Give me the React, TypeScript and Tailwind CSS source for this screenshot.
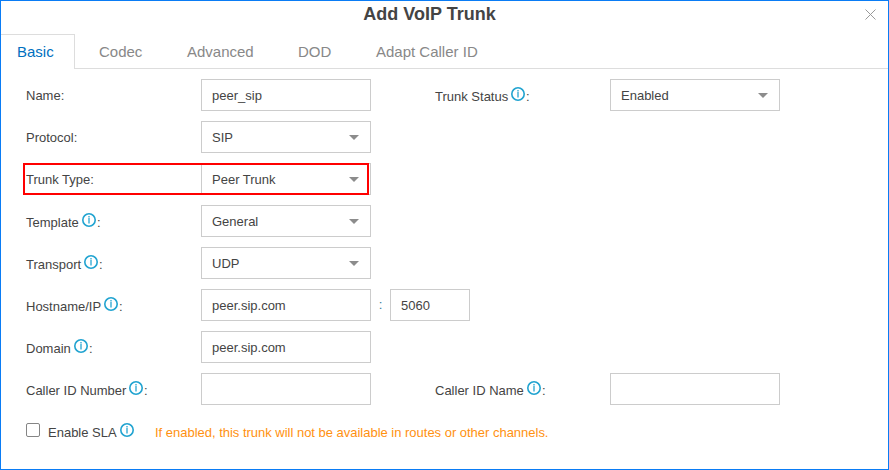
import type { ReactNode } from "react";

function InfoIcon() {
  return (
    <svg className="h-[14px] w-[14px] shrink-0" viewBox="0 0 14 14" fill="none">
      <circle cx="7" cy="7" r="6.2" stroke="#20a3d0" strokeWidth="1.6" />
      <path d="M7 3v1.500M7 5v5.500" stroke="#4fb6da" strokeWidth="1.6" />
    </svg>
  );
}

function Label({ text, textWidth, width = "w-[175px]" }: { text: string; textWidth?: string; width?: string }) {
  return (
    <label className={`flex h-8 shrink-0 items-center whitespace-nowrap ${width}`}>
      {textWidth ? (
        <>
          <span className={`${textWidth} shrink-0 pt-[3px]`}>{text}</span>
          <span className="-mt-[2px]"><InfoIcon /></span>
          <span className="ml-px pt-[3px]">:</span>
        </>
      ) : (
        <span className="pt-px">{text}</span>
      )}
    </label>
  );
}

function Field({ value = "", select = false, width = "w-[170px]" }: { value?: string; select?: boolean; width?: string }) {
  return (
    <div className={`flex h-8 shrink-0 items-center justify-between border border-[#cccccc] bg-white pr-[11px] pl-[10px] ${width}`}>
      <span className="pt-px">{value}</span>
      {select && (
        <svg className="mt-px h-[5px] w-[10px]" viewBox="0 0 10 5" fill="#8c8c8c">
          <path d="M0 0h10L5 5z" />
        </svg>
      )}
    </div>
  );
}

function Row({ children }: { children: ReactNode }) {
  return <div className="flex h-8 items-center">{children}</div>;
}

function Tab({ children, width }: { children: ReactNode; width: string }) {
  return <button className={`h-[35px] border-b border-[#dddddd] pt-[2px] text-left text-[#888888] ${width}`}>{children}</button>;
}

export default function App() {
  return (
    <div className="h-[470px] w-[889px] overflow-hidden border border-[#0a7cf5] bg-white font-['Liberation_Sans',Arial,sans-serif] text-[13px] leading-4 text-[#444444]">
      <header className="relative flex h-[33px] justify-center">
        <h1 className="pt-[3px] pr-[30px] text-[18px] leading-5 font-bold">Add VoIP Trunk</h1>
        <button aria-label="Close" className="absolute top-[8px] right-[12px]">
          <svg className="h-[11px] w-[11px]" viewBox="0 0 11 11" stroke="#999999" strokeWidth="1">
            <path d="M.5 .5l10 10M10.500 .5l-10 10" />
          </svg>
        </button>
      </header>
      <nav className="flex h-[35px] text-[15px]">
        <button className="h-[35px] w-[74px] shrink-0 border-t border-r border-[#dddddd] pl-4 text-left text-[#0070c0]">Basic</button>
        <Tab width="w-[88px] pl-6">Codec</Tab>
        <Tab width="w-[111px] pl-6">Advanced</Tab>
        <Tab width="w-[78px] pl-6">DOD</Tab>
        <Tab width="flex-1 pl-6">Adapt Caller ID</Tab>
      </nav>
      <main className="flex flex-col gap-[10px] pt-[10px] pl-[25px]">
        <Row>
          <Label text="Name:" />
          <Field value="peer_sip" />
          <div className="w-16 shrink-0" />
          <Label text="Trunk Status" textWidth="w-[76px]" />
          <Field value="Enabled" select />
        </Row>
        <Row>
          <Label text="Protocol:" />
          <Field value="SIP" select />
        </Row>
        <div className="relative flex h-8 items-center">
          <Label text="Trunk Type:" />
          <Field value="Peer Trunk" select />
          <div className="absolute top-0 -left-[3px] h-8 w-[346px] border-2 border-[#ff0000]" />
        </div>
        <Row>
          <Label text="Template" textWidth="w-[56px]" />
          <Field value="General" select />
        </Row>
        <Row>
          <Label text="Transport" textWidth="w-[58px]" />
          <Field value="UDP" select />
        </Row>
        <Row>
          <Label text="Hostname/IP" textWidth="w-[78px]" />
          <Field value="peer.sip.com" />
          <span className="w-[19px] shrink-0 text-center text-[#397b9a]">:</span>
          <Field value="5060" width="w-20" />
        </Row>
        <Row>
          <Label text="Domain" textWidth="w-[48px]" />
          <Field value="peer.sip.com" />
        </Row>
        <Row>
          <Label text="Caller ID Number" textWidth="w-[103px]" />
          <Field />
          <div className="w-16 shrink-0" />
          <Label text="Caller ID Name" textWidth="w-[92px]" />
          <Field />
        </Row>
        <Row>
          <span className="-mt-[2px] h-[14px] w-[14px] shrink-0 rounded-[2px] border border-[#858585]" />
          <span className="ml-2 w-[72px] shrink-0 pt-[3px] whitespace-nowrap">Enable SLA</span>
          <span className="-mt-[2px]"><InfoIcon /></span>
          <span className="ml-[21px] pt-[3px] tracking-[-0.015px] whitespace-nowrap text-[#ff9110]">If enabled, this trunk will not be available in routes or other channels.</span>
        </Row>
      </main>
    </div>
  );
}
